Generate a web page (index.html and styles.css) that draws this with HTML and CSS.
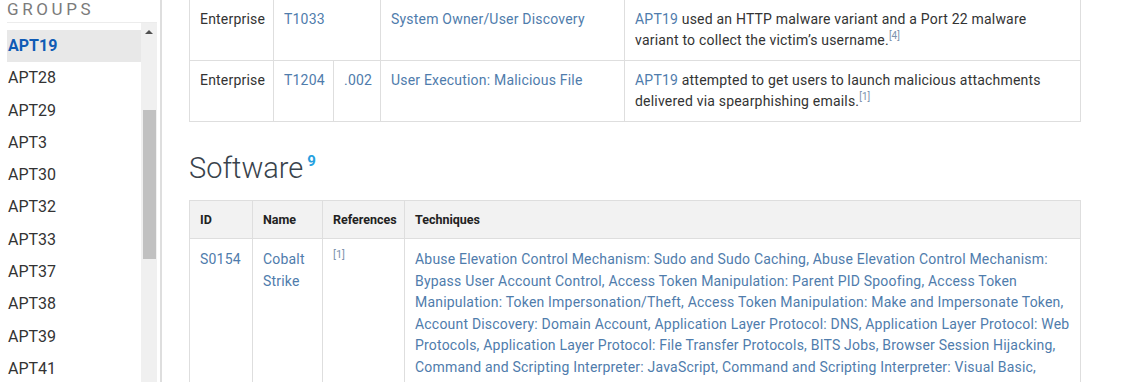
FILE: index.html
```html
<!DOCTYPE html>
<html lang="en">
<head>
    <meta charset="UTF-8">
    <meta name="viewport" content="width=device-width, initial-scale=1.0">
    <title>APT19 - Groups</title>
    <link rel="stylesheet" href="styles.css">
</head>
<body>
    <div class="page">
        <aside class="sidebar">
            <div class="sidebar-title">Groups</div>
            <div class="group-box">
                <ul class="group-list">
                    <li class="active">APT19</li>
                    <li>APT28</li>
                    <li>APT29</li>
                    <li>APT3</li>
                    <li>APT30</li>
                    <li>APT32</li>
                    <li>APT33</li>
                    <li>APT37</li>
                    <li>APT38</li>
                    <li>APT39</li>
                    <li>APT41</li>
                    <li>Aquatic Panda</li>
                </ul>
                <div class="scrollbar">
                    <div class="scroll-arrow"></div>
                    <div class="scroll-thumb"></div>
                </div>
            </div>
        </aside>

        <main class="content">
            <table class="data-table techniques-table">
                <colgroup>
                    <col style="width: 84px">
                    <col style="width: 60px">
                    <col style="width: 47px">
                    <col style="width: 244px">
                    <col>
                </colgroup>
                <tr>
                    <td>Enterprise</td>
                    <td colspan="2"><a href="#">T1033</a></td>
                    <td><a href="#">System Owner/User Discovery</a></td>
                    <td><a href="#">APT19</a> used an HTTP malware variant and a Port 22 malware variant to collect the victim’s username.<sup><a href="#">[4]</a></sup></td>
                </tr>
                <tr>
                    <td>Enterprise</td>
                    <td><a href="#">T1204</a></td>
                    <td><a href="#">.002</a></td>
                    <td><a href="#">User Execution: Malicious File</a></td>
                    <td><a href="#">APT19</a> attempted to get users to launch malicious attachments delivered via spearphishing emails.<sup><a href="#">[1]</a></sup></td>
                </tr>
            </table>

            <h2 class="section-title">Software<sup class="count">9</sup></h2>

            <table class="data-table software-table">
                <colgroup>
                    <col style="width: 63px">
                    <col style="width: 70px">
                    <col style="width: 82px">
                    <col>
                </colgroup>
                <tr>
                    <th>ID</th>
                    <th>Name</th>
                    <th>References</th>
                    <th>Techniques</th>
                </tr>
                <tr>
                    <td><a href="#">S0154</a></td>
                    <td><a href="#">Cobalt Strike</a></td>
                    <td><sup class="ref"><a href="#">[1]</a></sup></td>
                    <td class="technique-list">
                        <a href="#">Abuse Elevation Control Mechanism: Sudo and Sudo Caching</a>,
                        <a href="#">Abuse Elevation Control Mechanism: Bypass User Account Control</a>,
                        <a href="#">Access Token Manipulation: Parent PID Spoofing</a>,
                        <a href="#">Access Token Manipulation: Token Impersonation/Theft</a>,
                        <a href="#">Access Token Manipulation: Make and Impersonate Token</a>,
                        <a href="#">Account Discovery: Domain Account</a>,
                        <a href="#">Application Layer Protocol: DNS</a>,
                        <a href="#">Application Layer Protocol: Web Protocols</a>,
                        <a href="#">Application Layer Protocol: File Transfer Protocols</a>,
                        <a href="#">BITS Jobs</a>,
                        <a href="#">Browser Session Hijacking</a>,
                        <a href="#">Command and Scripting Interpreter: JavaScript</a>,
                        <a href="#">Command and Scripting Interpreter: Visual Basic</a>,
                        <a href="#">Command and Scripting Interpreter: PowerShell</a>,
                        <a href="#">Command and Scripting Interpreter: Python</a>
                    </td>
                </tr>
            </table>
        </main>
    </div>
</body>
</html>
```

FILE: styles.css
```css
html, body {
    height: 100%;
    margin: 0;
    overflow: hidden;
}
body {
    font-family: Roboto, "Liberation Sans", sans-serif;
    color: #333;
    background: #fff;
}
a {
    color: #4f7cac;
    text-decoration: none;
}
.page {
    display: flex;
    height: 100%;
}

/* sidebar */
.sidebar {
    width: 162px;
    flex-shrink: 0;
    box-sizing: border-box;
    padding: 0 3px 0 7px;
    border-right: 2px solid #dedede;
    display: flex;
    flex-direction: column;
}
.sidebar-title {
    margin-top: -3px;
    height: 25px;
    line-height: 24px;
    font-size: 17px;
    letter-spacing: 3.6px;
    text-transform: uppercase;
    color: #7b7b7b;
}
.group-box {
    flex: 1;
    display: flex;
    border-top: 1px solid #ececec;
    overflow: hidden;
}
.group-list {
    flex: 1;
    list-style: none;
    margin: 0;
    padding: 7px 0 0;
}
.group-list li {
    line-height: 32.3px;
    padding-left: 1px;
    font-size: 16px;
    color: #333;
}
.group-list li.active {
    background: #e8e8e8;
    color: #0f5bb5;
    font-weight: bold;
}
.scrollbar {
    width: 16px;
    background: #f0f0f0;
    display: flex;
    flex-direction: column;
    align-items: center;
}
.scroll-arrow {
    margin-top: 7px;
    width: 0;
    height: 0;
    border-left: 4px solid transparent;
    border-right: 4px solid transparent;
    border-bottom: 4px solid #505050;
}
.scroll-thumb {
    margin-top: 76px;
    width: 13px;
    height: 149px;
    background: #c1c1c1;
}

/* content */
.content {
    flex: 1;
    padding-left: 27px;
}
.data-table {
    width: 892px;
    table-layout: fixed;
    border-collapse: collapse;
    font-size: 14px;
    line-height: 21px;
    letter-spacing: 0.2px;
}
.techniques-table {
    margin-top: -1px;
}
.data-table td, .data-table th {
    border: 1px solid #dedede;
    padding: 9px 10px;
    vertical-align: top;
    text-align: left;
}
.data-table sup {
    font-size: 10px;
    line-height: 0;
    letter-spacing: 0;
}
.data-table sup a {
    color: #7d93ad;
}
.section-title {
    margin: 28px 0 14px;
    font-size: 29px;
    line-height: 36px;
    font-weight: 300;
    color: #39434c;
}
.section-title .count {
    margin-left: 4px;
    font-size: 15px;
    font-weight: bold;
    color: #25a0df;
    vertical-align: 12px;
    line-height: 0;
}
.software-table th {
    background: #f2f2f2;
    font-size: 12.5px;
    line-height: 17px;
    letter-spacing: 0;
    padding: 10px;
    color: #222;
}
.software-table td {
    padding: 10px;
    line-height: 21.6px;
}
.software-table .ref {
    font-size: 11px;
    vertical-align: 6px;
}
.technique-list {
    color: #4f7cac;
}
```
